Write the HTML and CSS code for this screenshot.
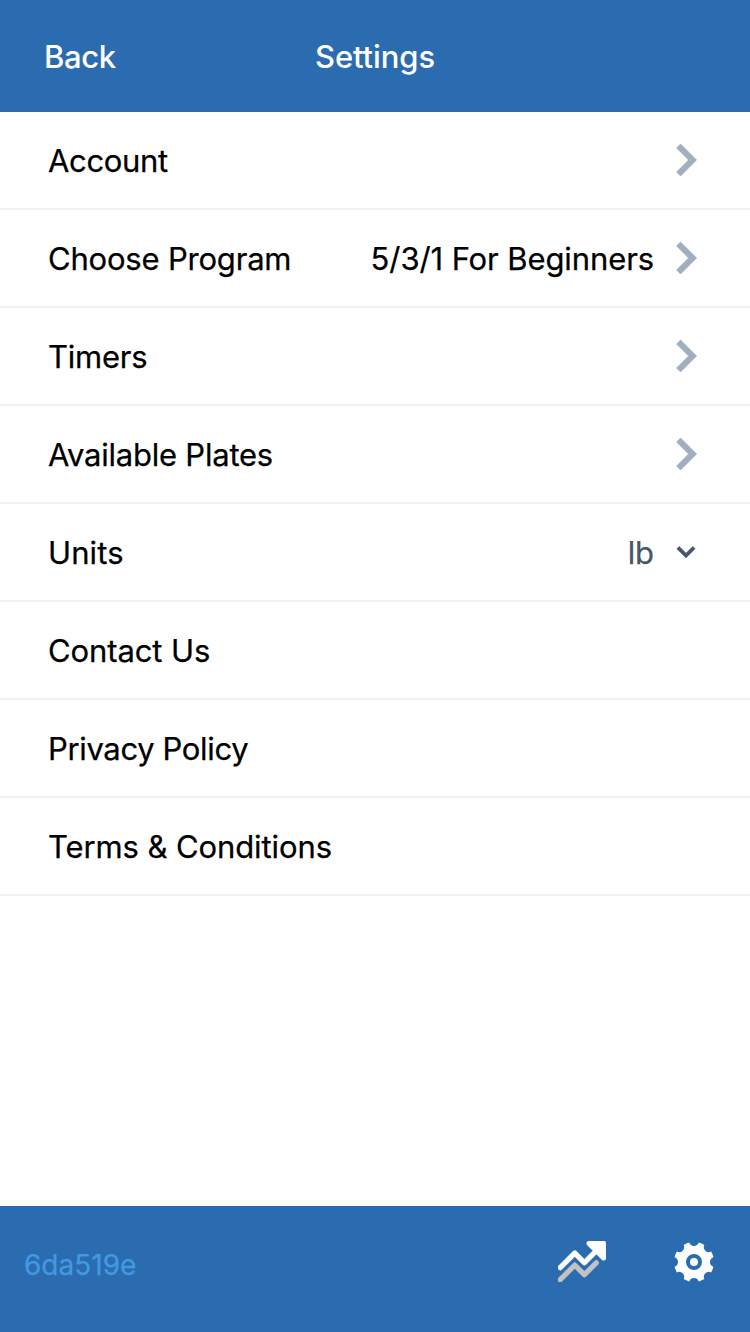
FILE: index.html
```html
<!DOCTYPE html>
<html lang="en">
<head>
<meta charset="utf-8">
<title>Settings</title>
<link rel="stylesheet" href="styles.css">
</head>
<body>
<svg class="symbols" aria-hidden="true">
  <symbol id="chevron" viewBox="6.386 4.343 7.071 11.314" overflow="visible"><path d="M12.95 10.707l.707-.707L8 4.343 6.586 5.757 10.828 10l-4.242 4.243L8 15.657z"/></symbol>
</svg>
<div class="app">
  <header class="header">
    <a class="back">Back</a>
    <h1 class="title">Settings</h1>
  </header>
  <main class="list">
    <div class="row"><span class="label account">Account</span><svg class="chevron"><use href="#chevron"/></svg></div>
    <div class="row"><span class="label choose">Choose Program</span><span class="value program">5/3/1 For Beginners</span><svg class="chevron"><use href="#chevron"/></svg></div>
    <div class="row"><span class="label timers">Timers</span><svg class="chevron"><use href="#chevron"/></svg></div>
    <div class="row"><span class="label plates">Available Plates</span><svg class="chevron"><use href="#chevron"/></svg></div>
    <div class="row"><span class="label units">Units</span><span class="value unit">lb</span><svg class="select-arrow" viewBox="0 0 20 20"><path d="M9.293 12.95l.707.707L15.657 8l-1.414-1.414L10 10.828 5.757 6.586 4.343 8z"/></svg></div>
    <div class="row"><span class="label contact">Contact Us</span></div>
    <div class="row"><span class="label privacy">Privacy Policy</span></div>
    <div class="row"><span class="label terms">Terms &amp; Conditions</span></div>
  </main>
  <footer class="footer">
    <span class="version">6da519e</span>
    <svg class="trend" viewBox="2 4 20 17"><path class="muted" d="M3.7 20.7a1 1 0 1 1-1.4-1.4l6-6a1 1 0 0 1 1.4 0l3.3 3.29 4.3-4.3a1 1 0 0 1 1.4 1.42l-5 5a1 1 0 0 1-1.4 0L9 15.4l-5.3 5.3z"/><path d="M16.59 8l-2.3-2.3A1 1 0 0 1 15 4h6a1 1 0 0 1 1 1v6a1 1 0 0 1-1.7.7L18 9.42l-4.3 4.3a1 1 0 0 1-1.4 0L9 10.4l-5.3 5.3a1 1 0 1 1-1.4-1.42l6-6a1 1 0 0 1 1.4 0l3.3 3.3L16.59 8z"/></svg>
    <svg class="cog" viewBox="0 0 24 24"><path d="M6.8 3.45c.87-.52 1.82-.92 2.83-1.17a2.5 2.5 0 0 0 4.74 0c1.01.25 1.96.65 2.82 1.17a2.5 2.5 0 0 0 3.36 3.36c.52.86.92 1.8 1.17 2.82a2.5 2.5 0 0 0 0 4.74c-.25 1.01-.65 1.96-1.17 2.82a2.5 2.5 0 0 0-3.36 3.36c-.86.52-1.8.92-2.82 1.17a2.5 2.5 0 0 0-4.74 0c-1.01-.25-1.96-.65-2.82-1.17a2.5 2.5 0 0 0-3.36-3.36 9.94 9.94 0 0 1-1.17-2.82 2.5 2.5 0 0 0 0-4.74c.25-1.01.65-1.96 1.17-2.82a2.5 2.5 0 0 0 3.36-3.36zM12 16a4 4 0 1 0 0-8 4 4 0 0 0 0 8z"/><circle cx="12" cy="12" r="2"/></svg>
  </footer>
</div>
</body>
</html>
```
FILE: styles.css
```css
* { box-sizing: border-box; }
body { margin: 0; background: #fff; color: #000; font: 400 31px/48px Inter, "Liberation Sans", sans-serif; }
svg { display: block; flex: none; fill: currentColor; }
.symbols { position: absolute; width: 0; height: 0; }
.app { display: flex; flex-direction: column; height: 1332px; }
.header { display: grid; grid-template-columns: 1fr auto 1fr; align-items: center; height: 112px; padding: 2px 44px 0; background: #2b6cb0; color: #fff; font-weight: 500; }
.title { margin: 0; font-size: 31px; font-weight: 500; letter-spacing: -.1px; }
.back { letter-spacing: -.4px; }
.list { flex: 1; }
.row { display: flex; align-items: center; height: 98px; padding: 0 54px 0 48px; border-bottom: 2px solid #edf2f7; white-space: nowrap; }
.label { flex: 1; padding-top: 2px; letter-spacing: -.1px; -webkit-text-stroke: .25px; }
.account { letter-spacing: -.35px; }
.choose { letter-spacing: -.2px; }
.timers { letter-spacing: -.25px; }
.plates { letter-spacing: -.23px; }
.units { letter-spacing: .1px; }
.privacy { letter-spacing: -.35px; }
.value { padding-top: 2px; letter-spacing: -.1px; -webkit-text-stroke: .25px; }
.program { margin-right: 22px; }
.unit { margin-right: 16px; color: #4a5568; }
.chevron { width: 20px; height: 32px; overflow: visible; color: #a0aec0; stroke: currentColor; stroke-width: .25; }
.select-arrow { width: 32px; height: 32px; margin-right: -6px; color: #4a5568; stroke: currentColor; stroke-width: .45; }
.footer { display: flex; align-items: center; height: 126px; padding: 0 32px 14px 24px; background: #2b6cb0; color: #fff; }
.version { flex: 1; padding-top: 5px; color: #4299e1; font-size: 28px; -webkit-text-stroke: .25px; }
.trend { width: 48px; height: 41px; margin: 0 64px 1px 0; stroke: currentColor; stroke-width: .25; }
.muted { fill: #c3c3c3; stroke: #c3c3c3; }
.cog { width: 48px; height: 48px; }
```
